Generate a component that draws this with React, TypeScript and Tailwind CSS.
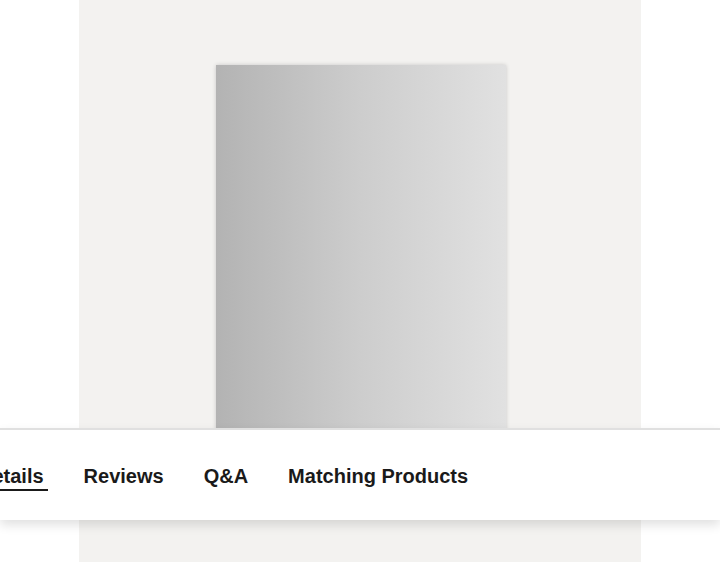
import React from "react";

export default function App() {
  const tabs = ["Details", "Reviews", "Q&A", "Matching Products"];
  return (
    <div className="relative w-[720px] h-[563px] overflow-hidden bg-white" style={{ fontFamily: '"Liberation Sans", Arial, sans-serif' }}>
      <div className="mx-auto w-[562px] h-[562px] bg-[#f3f2f0] flex justify-center pt-[65px]">
        <div className="ml-[2px] w-[290px] h-[420px] bg-gradient-to-r from-[#b3b3b3] via-[#cdcdcd] to-[#e1e1e1] shadow-[0_0_4px_rgba(0,0,0,0.18)]" />
      </div>
      <div className="absolute left-0 right-0 top-[428px] h-[92px] bg-white border-t-2 border-[rgba(0,0,0,0.12)] shadow-[0_5px_10px_rgba(0,0,0,0.12)]">
        <div className="flex items-start gap-10 ml-[-22px] pt-[34px]">
          {tabs.map((t, i) => (
            <div
              key={t}
              className={
                "text-[20px] leading-[24px] font-bold text-[#1a1a1a] whitespace-nowrap " +
                (i === 0 ? "pb-px border-b-2 border-[#1a1a1a] pr-1 -mr-1" : "pb-px border-b-2 border-transparent")
              }
            >
              {t}
            </div>
          ))}
        </div>
      </div>
    </div>
  );
}
